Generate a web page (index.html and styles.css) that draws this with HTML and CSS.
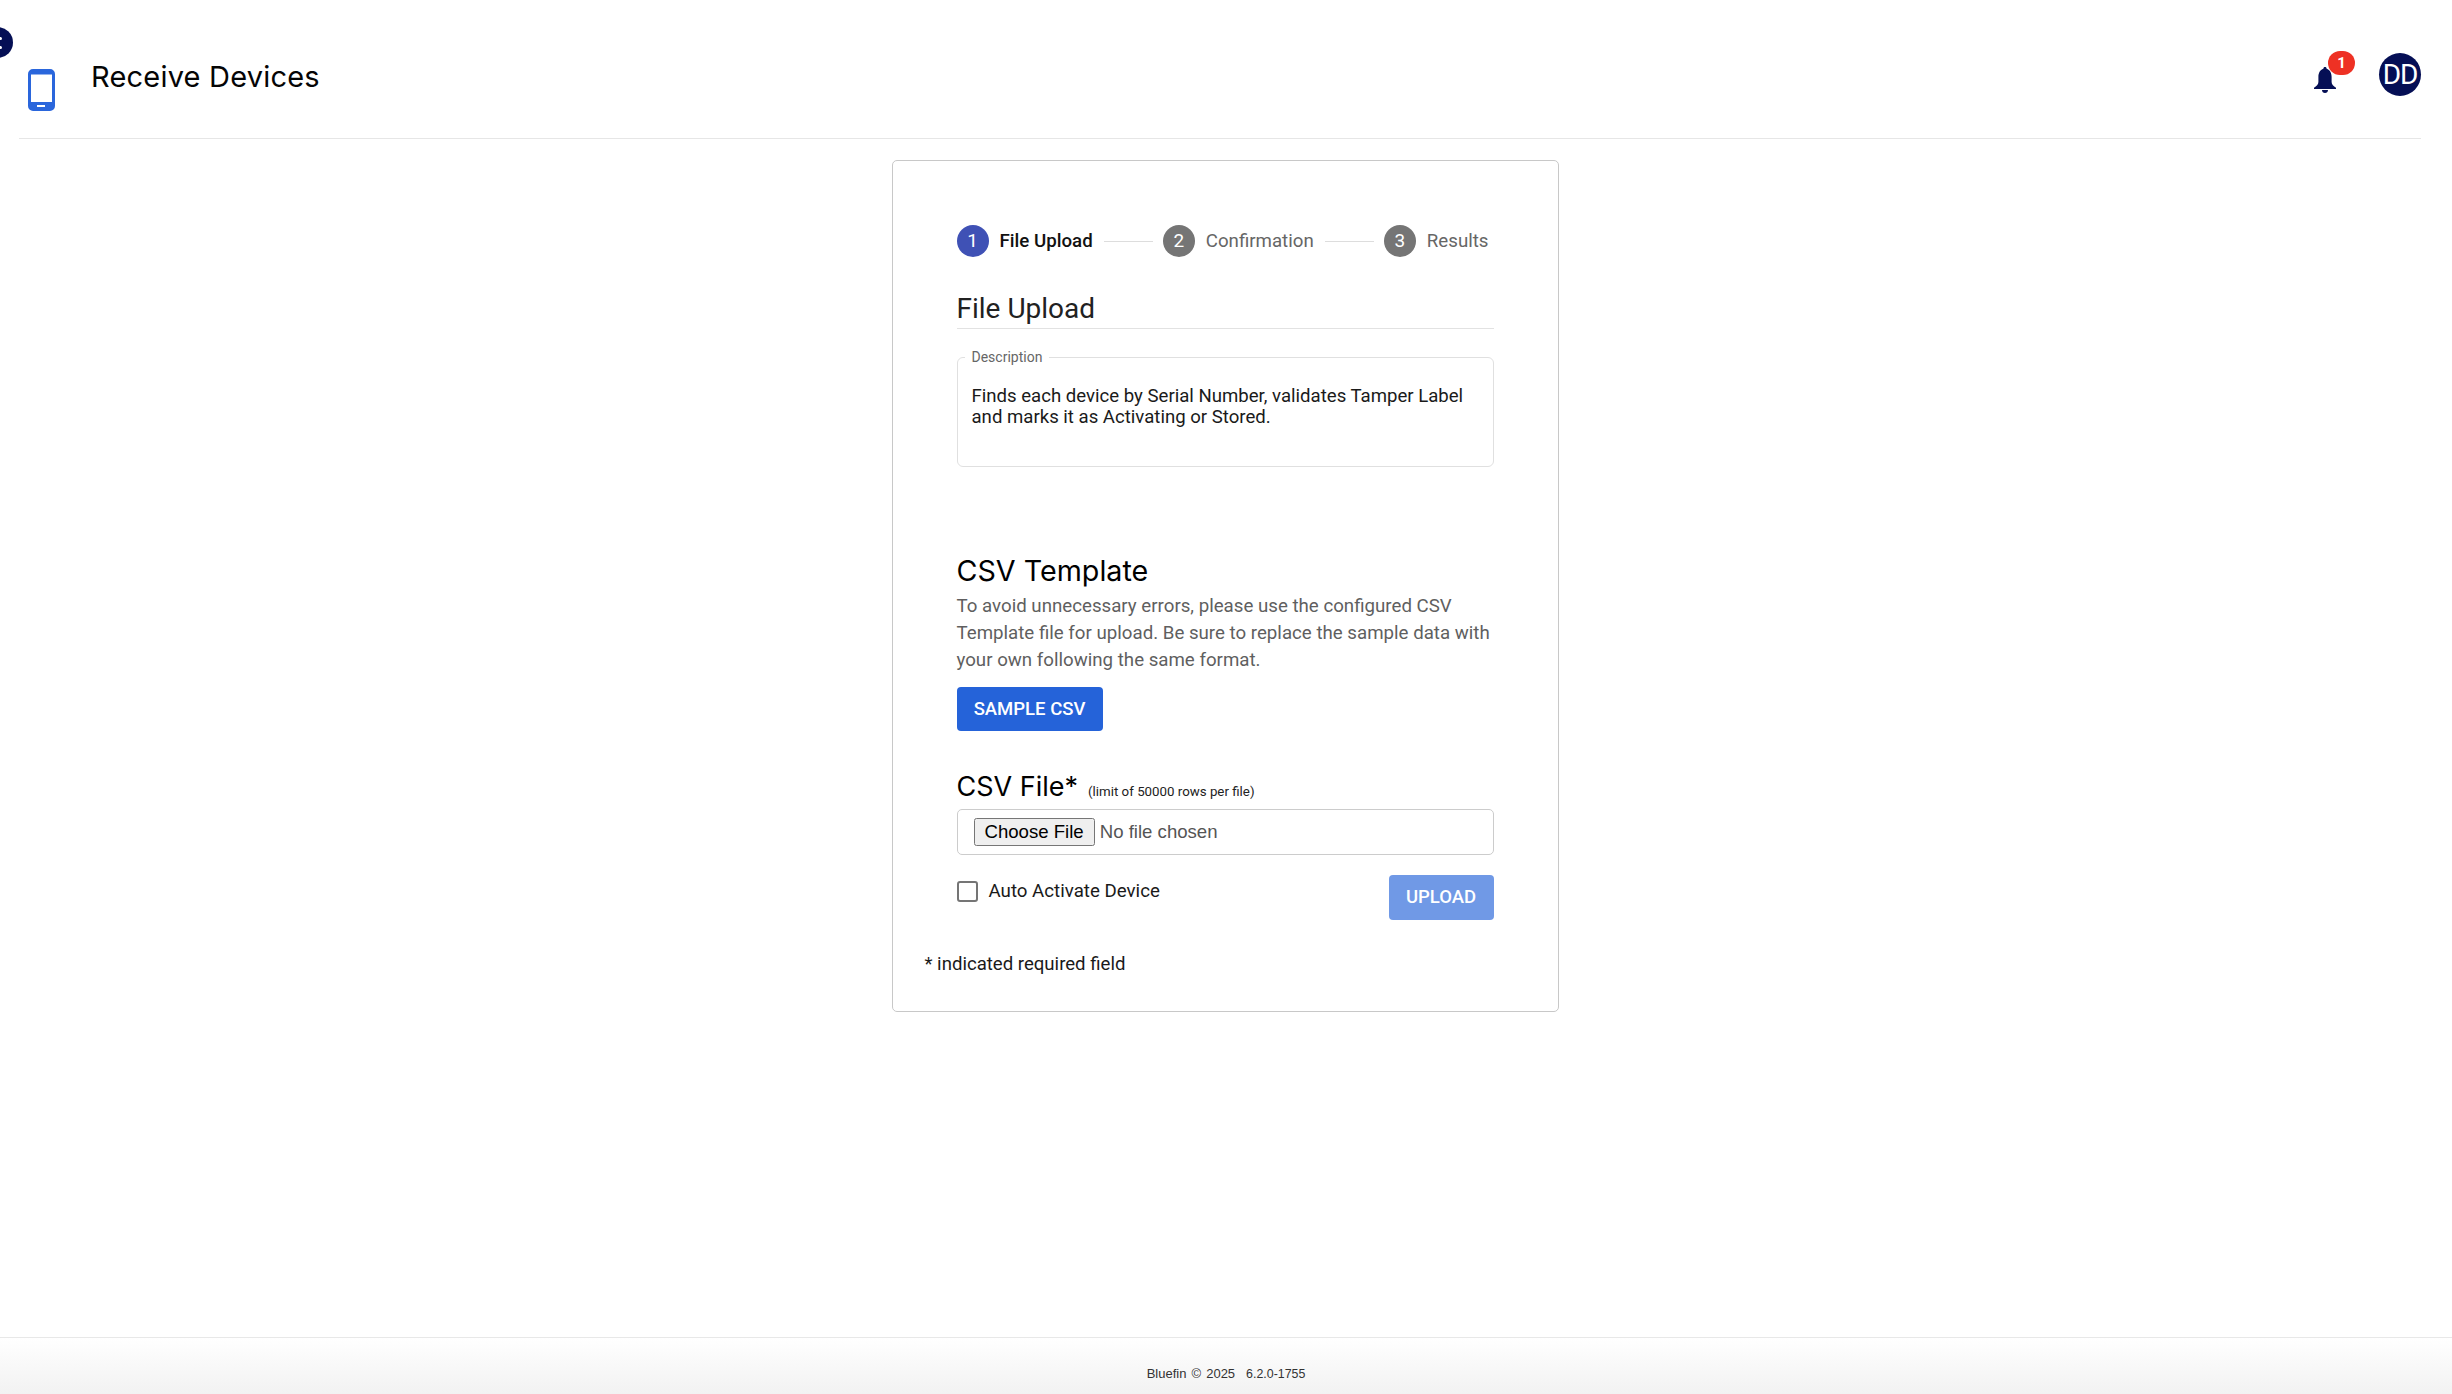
FILE: index.html
```html
<!DOCTYPE html>
<html lang="en">
<head>
<meta charset="utf-8">
<title>Receive Devices</title>
<link rel="stylesheet" href="styles.css">
</head>
<body>
<button class="nav-toggle" type="button" aria-label="Menu"><span></span><span></span></button>
<header class="topbar">
  <div class="page-title">
    <svg class="phone" viewBox="0 0 27 42" aria-hidden="true">
      <path fill-rule="evenodd" fill="#2a66dc" d="M5 0h17a5 5 0 0 1 5 5v32a5 5 0 0 1-5 5H5a5 5 0 0 1-5-5V5a5 5 0 0 1 5-5zM3 5.500V33h21V5.500zM9 36v2h8v-2z"/>
    </svg>
    <h1>Receive Devices</h1>
  </div>
  <div class="top-actions">
    <div class="bell">
      <svg viewBox="0 0 22 26" aria-hidden="true"><path d="M11 0c1 0 1.600.7 1.600 1.700C16 2.700 17.600 6 17.600 10v5c0 2.600 2 4.300 4.400 5.800V22H0v-1.200c2.400-1.500 4.400-3.200 4.400-5.800v-5c0-4 1.600-7.300 5-8.300C9.400.7 10 0 11 0zM8 23h6c0 1.700-1.300 3-3 3s-3-1.300-3-3z"/></svg>
      <span class="badge">1</span>
    </div>
    <div class="avatar">DD</div>
  </div>
</header>
<main class="content">
  <section class="card">
    <ol class="stepper">
      <li class="step active"><span class="num">1</span><span class="lbl">File Upload</span></li>
      <li class="line"></li>
      <li class="step"><span class="num">2</span><span class="lbl">Confirmation</span></li>
      <li class="line"></li>
      <li class="step"><span class="num">3</span><span class="lbl">Results</span></li>
    </ol>
    <h2 class="section-title">File Upload</h2>
    <fieldset class="desc">
      <legend>Description</legend>
      <p>Finds each device by Serial Number, validates Tamper Label and marks it as Activating or Stored.</p>
    </fieldset>
    <h3 class="heading template-heading">CSV Template</h3>
    <p class="hint">To avoid unnecessary errors, please use the configured CSV Template file for upload. Be sure to replace the sample data with your own following the same format.</p>
    <button class="btn sample" type="button">SAMPLE CSV</button>
    <div class="file-heading">
      <h3 class="heading">CSV File*</h3>
      <small>(limit of 50000 rows per file)</small>
    </div>
    <div class="file-box"><input type="file" class="file-input"></div>
    <div class="actions">
      <label class="check"><input type="checkbox"><span>Auto Activate Device</span></label>
      <button class="btn upload" type="button">UPLOAD</button>
    </div>
    <p class="note">* indicated required field</p>
  </section>
</main>
<footer class="footer"><span class="brand">Bluefin © 2025</span><span class="version">6.2.0-1755</span></footer>
</body>
</html>
```
FILE: styles.css
```css
* { box-sizing: border-box; }
html, body { height: 100%; }
body {
  margin: 0;
  height: 1394px;
  display: flex;
  flex-direction: column;
  font-family: Roboto, "Liberation Sans", sans-serif;
  background: #fff;
  color: #000;
  overflow: hidden;
}
.nav-toggle {
  position: absolute;
  left: -18px;
  top: 27px;
  width: 31px;
  height: 31px;
  border: 0;
  padding: 0 0 0 17px;
  border-radius: 50%;
  background: #050f55;
  display: flex;
  flex-direction: column;
  justify-content: center;
  gap: 6px;
}
.nav-toggle span { width: 3px; height: 3px; border-radius: 50%; background: #fff; }
.topbar {
  height: 139px;
  margin: 0 31px 0 19px;
  border-bottom: 1px solid #e6e6e6;
  display: flex;
  justify-content: space-between;
  position: relative;
  flex: none;
}
.page-title { display: flex; padding: 69px 0 0 9px; }
.phone { width: 27px; height: 42px; flex: none; }
.page-title h1 {
  margin: -13px 0 0 36px;
  height: 42px;
  font: 400 29px/42px Inter, sans-serif;
  letter-spacing: 0.2px;
  color: #050505;
}
.top-actions { display: flex; align-items: flex-start; padding-top: 53px; }
.bell { position: relative; width: 22px; height: 26px; margin: 14px 43px 0 0; }
.bell svg { display: block; width: 22px; height: 26px; fill: #050f55; }
.badge {
  position: absolute;
  left: 14px;
  top: -16px;
  width: 27px;
  height: 24px;
  border-radius: 12px;
  background: #ee3124;
  color: #fff;
  font: 700 15px/24px Roboto, sans-serif;
  text-align: center;
}
.avatar {
  width: 42px;
  height: 43px;
  border-radius: 50%;
  background: #050f55;
  color: #fff;
  font: 400 28px/43px Roboto, sans-serif;
  text-align: center;
  white-space: nowrap;
  letter-spacing: -1px;
}
.content { flex: 1; display: flex; justify-content: center; align-items: flex-start; padding: 21px 2px 0 0; }
.card {
  width: 667px;
  height: 852px;
  border: 1px solid #c8c8c8;
  border-radius: 5px;
  padding: 64px 64px 0;
}
.stepper { list-style: none; margin: 0; padding: 0; display: flex; align-items: center; height: 32px; margin-right: 5px; }
.step { display: flex; align-items: center; gap: 11px; flex: none; }
.num {
  width: 32px;
  height: 32px;
  border-radius: 50%;
  background: #757575;
  color: #fff;
  font: 400 19px/32px Roboto, sans-serif;
  text-align: center;
}
.lbl { font-size: 18.7px; color: #666; }
.active .num { background: #3f51b5; }
.active .lbl { color: #111; font-weight: 500; }
.line { flex: 1; height: 1px; background: #ddd; margin: 0 10px 0 11px; }
.section-title {
  margin: 23px 0 0;
  height: 49px;
  border-bottom: 1px solid #e2e2e2;
  font: 400 28px/58px Roboto, sans-serif;
  color: #212121;
}
.desc {
  margin: 21px 0 0;
  padding: 0 14px;
  height: 117px;
  border: 1px solid #e0e0e0;
  border-radius: 6px;
  display: block;
  min-width: 0;
}
.desc legend { font-size: 14px; line-height: 15px; color: #666; padding: 0 7px; margin-left: -7px; }
.desc p { margin: 21px 0 0; font-size: 18.6px; line-height: 21px; color: #1a1a1a; }
.heading { margin: 0; font: 400 27px/38px Inter, sans-serif; color: #000; }
.template-heading { margin-top: 85px; font-size: 28.7px; }
.hint { margin: 3px 0 0; font-size: 18.7px; line-height: 27px; color: #5f5f5f; }
.btn {
  border: 0;
  border-radius: 4px;
  color: #fff;
  font: 500 18.5px/1 Roboto, sans-serif;
  height: 44px;
  padding: 0;
}
.sample { display: block; margin-top: 13px; width: 146px; background: #2563d9; }
.file-heading { display: flex; align-items: baseline; gap: 10px; margin-top: 37px; }
.file-heading small { font-size: 13.3px; color: #222; }
.file-box {
  margin-top: 3px;
  height: 46px;
  border: 1px solid #ccc;
  border-radius: 5px;
  display: flex;
  align-items: center;
  padding-left: 16px;
}
.file-input { font: 18.6px "Liberation Sans", sans-serif; color: #555; width: 400px; }
.file-input::file-selector-button { padding: 1px 9px; margin-right: 5px; }
.actions { display: flex; justify-content: space-between; align-items: flex-start; margin-top: 20px; }
.check { display: flex; align-items: center; gap: 11px; font-size: 18.7px; color: #1a1a1a; margin-top: 5px; height: 22px; }
.check input { margin: 0; width: 21px; height: 21px; appearance: none; border: 2px solid #757575; border-radius: 3px; background: #fff; }
.upload { width: 105px; height: 45px; background: #7099e6; }
.note { margin: 32px 0 0 -32px; font-size: 18.6px; line-height: 24px; color: #1a1a1a; }
.footer {
  flex: none;
  height: 57px;
  border-top: 1px solid #e8e8e8;
  background: linear-gradient(#fff, #f2f2f2);
  display: flex;
  justify-content: center;
  align-items: flex-end;
  gap: 11px;
  padding-bottom: 12px;
  font: 12px/16px "Liberation Sans", sans-serif;
  color: #333;
}
.brand { font-size: 13px; word-spacing: 1.5px; }
.version { font-size: 12.4px; }
```
